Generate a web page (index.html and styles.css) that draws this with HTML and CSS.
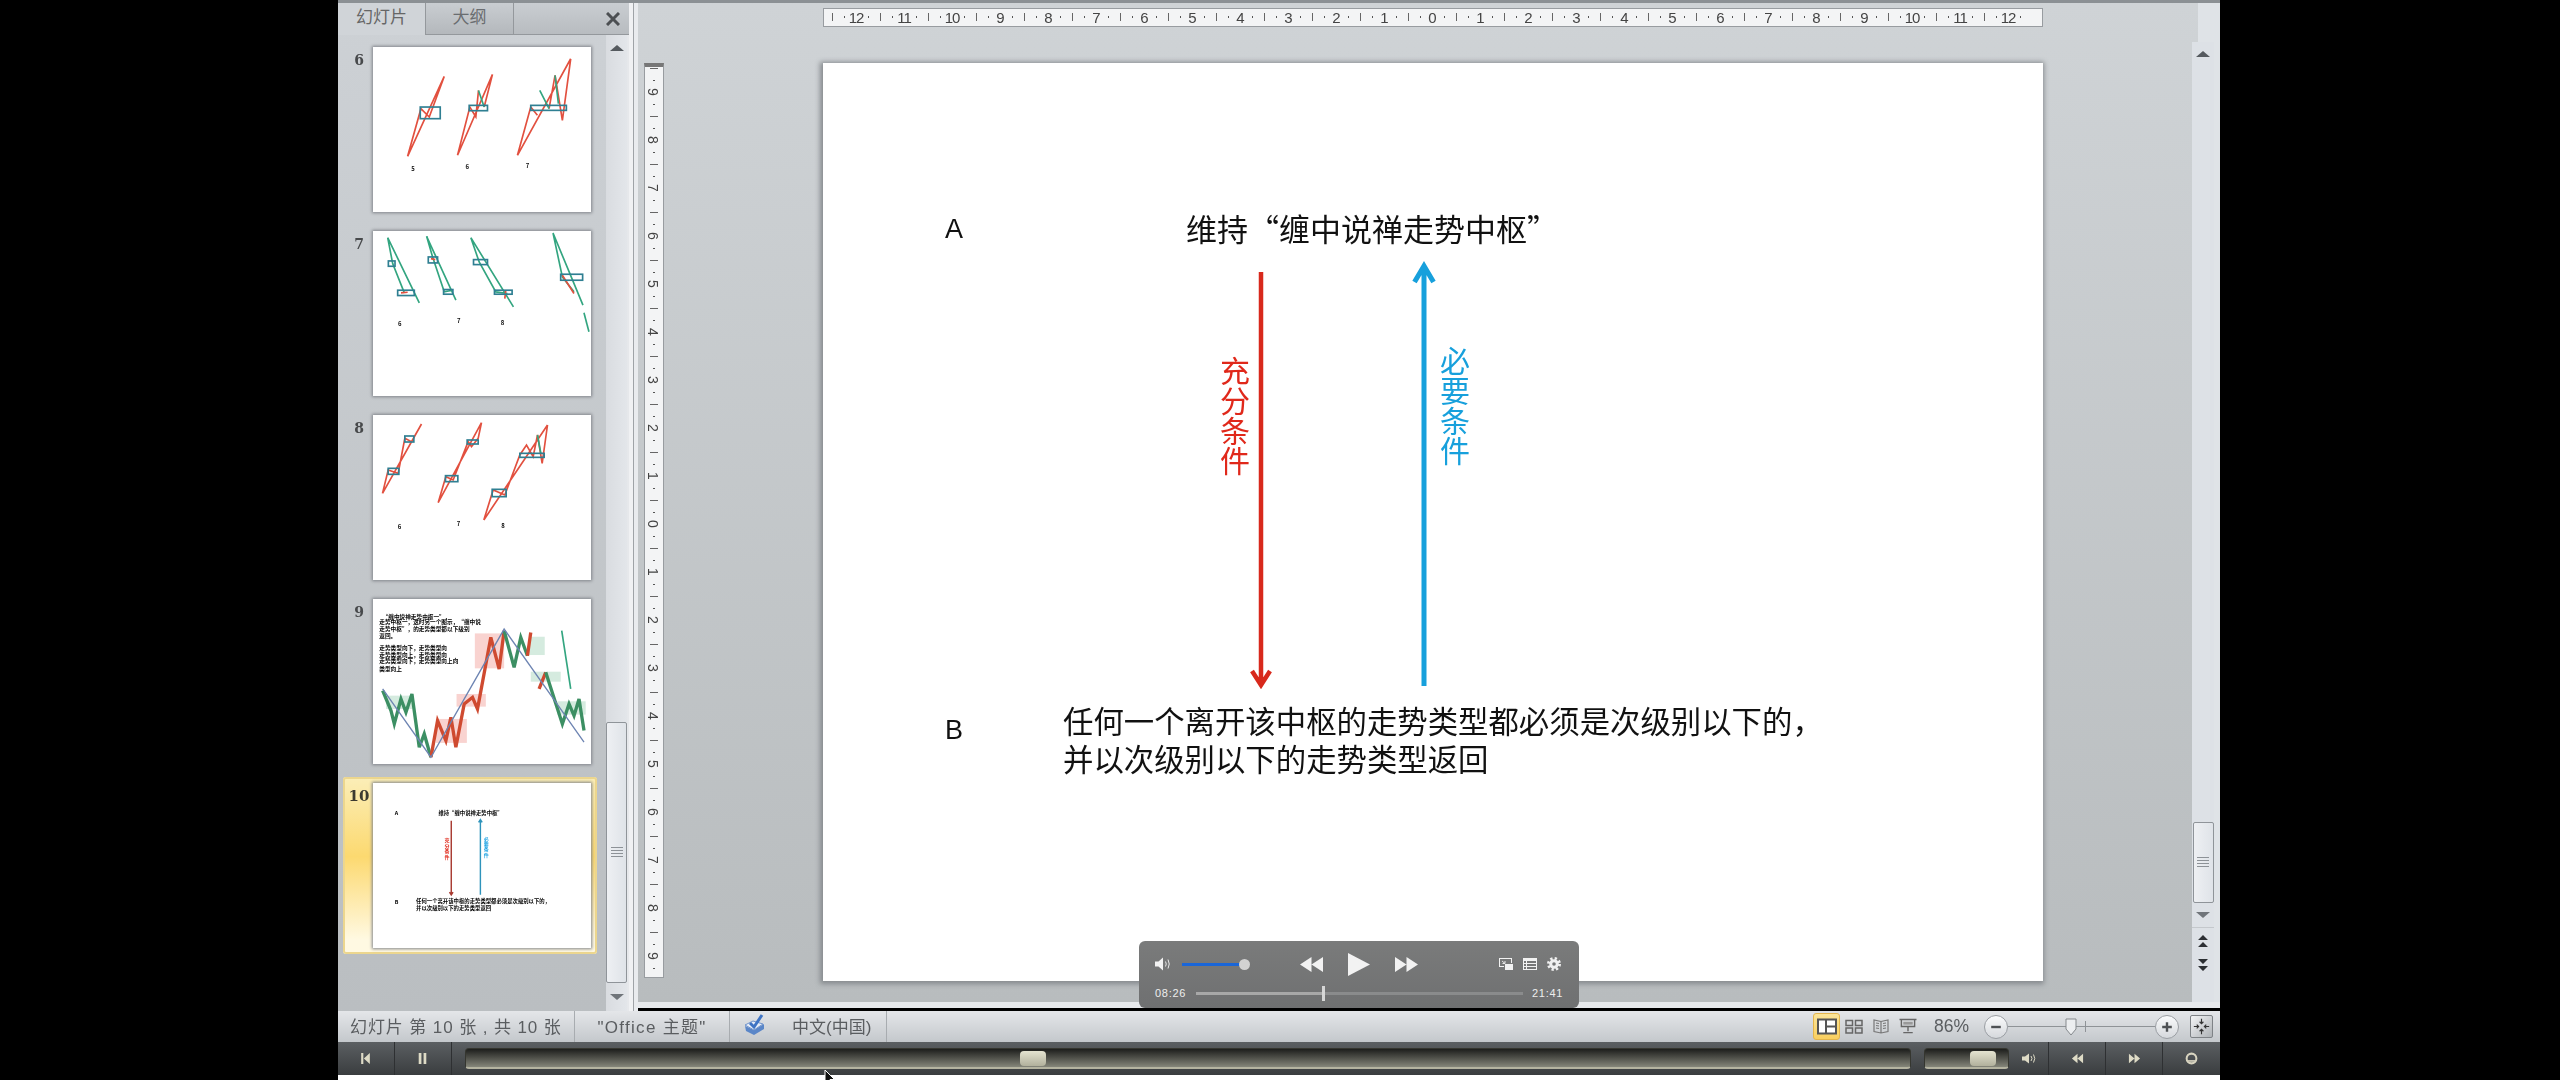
FILE: index.html
```html
<!DOCTYPE html>
<html>
  <head>
    <meta charset="UTF-8" />
    <title>幻灯片 10</title>
    <link rel="stylesheet" href="styles.css">
  </head>
  <body>
    <div class="window">
      <div class="topline"></div>
      <div class="panes">
        <div class="pane">
          <div class="tabs">
            <div class="tab active">幻灯片</div>
            <div class="tab">大纲</div>
            <div class="tab-rest">
              <svg class="close" viewBox="0 0 14 14"><path d="M1 1 L13 13 M13 1 L1 13" /></svg>
            </div>
          </div>
          <div class="pane-body">
            <div class="list">
              <div class="row">
                <div class="num">6</div>
                <svg class="thumb" viewBox="111 140 655 495">
                  <g class="red">
                    <path d="M215 468 L325 228 M215 468 L255 325 L280 350 L325 228" />
                    <path d="M365 465 L470 222 M365 465 L402 320 L420 350 L428 270 M445 320 L470 222" />
                    <path d="M545 465 L705 175 M545 465 L585 320 L605 345 M640 325 L658 225 M658 225 L680 360 L705 175" />
                  </g>
                  <g class="green">
                    <path d="M428 270 L445 320 M612 270 L640 325 M658 225 L668 310" />
                  </g>
                  <g class="box">
                    <rect x="253" y="320" width="60" height="35" />
                    <rect x="400" y="315" width="55" height="16" />
                    <rect x="585" y="315" width="107" height="15" />
                  </g>
                  <g class="mini">
                    <text x="226" y="511">5</text>
                    <text x="389" y="506">6</text>
                    <text x="570" y="503">7</text>
                  </g>
                </svg>
              </div>
              <div class="row">
                <div class="num">7</div>
                <svg class="thumb" viewBox="111 692 655 496">
                  <g class="green">
                    <path d="M155 712 L250 908 M155 712 L170 790 L205 878" />
                    <path d="M272 708 L360 900 M272 708 L290 770 L325 875 L350 870" />
                    <path d="M405 712 L533 920 M405 712 L430 785 L480 875 L515 880" />
                    <path d="M652 698 L742 915 M652 698 L680 830 L715 875" />
                    <path d="M745 938 L760 995" />
                  </g>
                  <g class="red">
                    <path d="M680 825 L715 880 M510 870 L507 895 M195 878 L215 876 M285 775 L298 778" />
                  </g>
                  <g class="box">
                    <rect x="157" y="782" width="20" height="16" />
                    <rect x="185" y="870" width="50" height="16" />
                    <rect x="277" y="770" width="28" height="18" />
                    <rect x="323" y="868" width="28" height="14" />
                    <rect x="413" y="778" width="42" height="15" />
                    <rect x="476" y="870" width="53" height="12" />
                    <rect x="675" y="822" width="66" height="18" />
                  </g>
                  <g class="mini">
                    <text x="186" y="978">6</text>
                    <text x="363" y="970">7</text>
                    <text x="495" y="975">8</text>
                  </g>
                </svg>
              </div>
              <div class="row">
                <div class="num">8</div>
                <svg class="thumb" viewBox="10 15 653 495">
                  <g class="red">
                    <path d="M38 250 L155 42 M38 250 L55 180 L85 190 L105 85 L125 95 L155 42" />
                    <path d="M205 278 L335 38 M205 278 L228 200 L250 210 L295 95 L305 110 L325 85 L335 38" />
                    <path d="M342 330 L533 45 M342 330 L370 240 L405 255 L450 135 L470 105 L490 140 L503 75 L517 160 L533 45" />
                  </g>
                  <g class="green">
                    <path d="M503 75 L513 130" />
                  </g>
                  <g class="box">
                    <rect x="55" y="175" width="32" height="18" />
                    <rect x="105" y="78" width="27" height="18" />
                    <rect x="227" y="197" width="37" height="18" />
                    <rect x="292" y="90" width="33" height="12" />
                    <rect x="367" y="238" width="42" height="22" />
                    <rect x="450" y="130" width="73" height="12" />
                  </g>
                  <g class="mini">
                    <text x="84" y="358">6</text>
                    <text x="261" y="349">7</text>
                    <text x="394" y="354">8</text>
                  </g>
                </svg>
              </div>
              <div class="row">
                <div class="num">9</div>
                <svg class="thumb" viewBox="111 25 655 495">
                  <g class="pink">
                    <rect x="417" y="128" width="88" height="105" />
                    <rect x="362" y="310" width="88" height="38" />
                    <rect x="300" y="385" width="93" height="72" />
                  </g>
                  <g class="mint">
                    <rect x="580" y="138" width="47" height="55" />
                    <rect x="585" y="243" width="90" height="30" />
                    <rect x="150" y="315" width="80" height="40" />
                    <rect x="665" y="332" width="85" height="40" />
                  </g>
                  <g class="lines">
                    <text x="140" y="84">“缠中说禅走势中枢一”，</text>
                    <text x="130" y="101">走势中枢一，这时另一个图示，“缠中说</text>
                    <text x="130" y="121">走势中枢”，的走势类型都以下级别</text>
                    <text x="130" y="141">返回。</text>
                    <text x="130" y="178">走势类型向下，走势类型向</text>
                    <text x="130" y="199">走势类型向上，走势类型向</text>
                    <text x="130" y="218">走势类型向下，走势类型向上向</text>
                    <text x="130" y="241">类型向上</text>
                  </g>
                  <path class="candle-g" d="M140 300 L165 360 L175 400 L195 325 L210 365 L228 310 L250 470 L265 430 L285 500" />
                  <path class="candle-r" d="M285 500 L305 390 L330 450 L345 380 L360 470 L385 340 L410 320 L425 355 L465 140 L490 235 L505 120" />
                  <path class="candle-g" d="M505 120 L535 230 L555 140 L575 195" />
                  <path class="candle-r" d="M575 195 L585 125 M610 295 L630 245" />
                  <path class="candle-g" d="M630 245 L680 400 L700 340 L715 375 L730 325 L745 420" />
                  <path class="trend" d="M140 295 L285 500 L505 115 L745 455" />
                  <path class="green" d="M678 120 L705 295" />
                </svg>
              </div>
              <div class="row active">
                <div class="num">10</div>
                <svg class="thumb" viewBox="0 0 1220 918">
                  <g class="tiny">
                    <text x="122" y="178">A</text>
                    <text x="366" y="178">维持“缠中说禅走势中枢”</text>
                    <text x="122" y="677">B</text>
                    <text x="241" y="670">任何一个离开该中枢的走势类型都必须是次级别以下的，</text>
                    <text x="241" y="708">并以次级别以下的走势类型返回</text>
                  </g>
                  <text class="tiny-red" x="400" y="330">充</text>
                  <text class="tiny-red" x="400" y="360">分</text>
                  <text class="tiny-red" x="400" y="390">条</text>
                  <text class="tiny-red" x="400" y="420">件</text>
                  <text class="tiny-blue" x="620" y="320">必</text>
                  <text class="tiny-blue" x="620" y="350">要</text>
                  <text class="tiny-blue" x="620" y="380">条</text>
                  <text class="tiny-blue" x="620" y="410">件</text>
                  <path class="t-red" d="M438 209 V623 M428 608 L438 624 L448 608" />
                  <path class="t-blue" d="M601 202 V623 M591 218 L601 202 L611 218" />
                </svg>
              </div>
            </div>
            <div class="pane-scroll">
              <div class="arrow up"></div>
              <div class="spacer"></div>
              <div class="scroll-thumb pane-thumb"><div class="grip"></div></div>
              <div class="arrow down"></div>
            </div>
          </div>
        </div>
        <div class="splitter"></div>
        <div class="workspace">
          <div class="stage">
            <div class="hruler">
              <span>12</span><span>11</span><span>10</span><span>9</span><span>8</span><span>7</span><span>6</span><span>5</span><span>4</span><span>3</span><span>2</span><span>1</span><span>0</span><span>1</span><span>2</span><span>3</span><span>4</span><span>5</span><span>6</span><span>7</span><span>8</span><span>9</span><span>10</span><span>11</span><span>12</span>
            </div>
            <div class="vruler">
              <span>9</span><span>8</span><span>7</span><span>6</span><span>5</span><span>4</span><span>3</span><span>2</span><span>1</span><span>0</span><span>1</span><span>2</span><span>3</span><span>4</span><span>5</span><span>6</span><span>7</span><span>8</span><span>9</span>
            </div>
            <div class="slide">
              <svg class="slide-arrows" viewBox="0 0 1220 918">
                <path class="a-red" d="M438 209 V621 M429 608 L438 622 L447 608" />
                <path class="a-blue" d="M601 204 V623 M591.500 219 L601 203 L610.500 219" />
              </svg>
              <div class="letter letter-a">A</div>
              <div class="title">维持“缠中说禅走势中枢”</div>
              <div class="vtext vtext-red">充分条件</div>
              <div class="vtext vtext-blue">必要条件</div>
              <div class="letter letter-b">B</div>
              <div class="body-text">任何一个离开该中枢的走势类型都必须是次级别以下的，<br />并以次级别以下的走势类型返回</div>
            </div>
          </div>
          <div class="main-scroll">
            <div class="arrow up dark"></div>
            <div class="spacer"></div>
            <div class="scroll-thumb main-thumb"><div class="grip"></div></div>
            <div class="arrow down"></div>
            <div class="page-btns">
              <svg viewBox="0 0 12 14"><path d="M6 0 L11 5 H1 Z M6 7 L11 12 H1 Z" /></svg>
              <svg viewBox="0 0 12 14"><path d="M1 1 H11 L6 6 Z M1 8 H11 L6 13 Z" /></svg>
            </div>
          </div>
        </div>
      </div>

      <div class="status">
        <div class="cell cell-count">幻灯片 第 10 张 , 共 10 张</div>
        <div class="cell cell-theme">"Office 主题"</div>
        <div class="cell cell-lang">
          <svg class="check" viewBox="0 0 24 24">
            <path d="M2 13 L11 17 L21 11 L21 16 L11 22 L3 18 Z" fill="#5a86c8" />
            <path d="M2 12 L10 8 L20 11 L11 17 Z" fill="#e8eef8" stroke="#6f93cc" />
            <path d="M7 10 L11 14 L19 2" fill="none" stroke="#3f74c4" stroke-width="3" />
          </svg>
          <span>中文(中国)</span>
        </div>
        <div class="status-right">
          <div class="view-btn on">
            <svg viewBox="0 0 20 16"><rect x="1" y="1" width="18" height="14" fill="#fff" stroke="#555" stroke-width="2" /><rect x="8" y="1" width="2" height="14" fill="#555" /><rect x="10" y="7" width="9" height="2" fill="#555" /></svg>
          </div>
          <div class="view-btn">
            <svg viewBox="0 0 20 16"><g fill="none" stroke="#666" stroke-width="1.500"><rect x="2" y="2" width="6.500" height="5" /><rect x="11.500" y="2" width="6.500" height="5" /><rect x="2" y="9.500" width="6.500" height="5" /><rect x="11.500" y="9.500" width="6.500" height="5" /></g></svg>
          </div>
          <div class="view-btn">
            <svg viewBox="0 0 20 16"><g fill="none" stroke="#777" stroke-width="1.200"><path d="M10 3 L3 1.500 V13 L10 14.500 L17 13 V1.500 Z M10 3 V14.500" /><path d="M5 4.500 L8 5 M5 7 L8 7.500 M5 9.500 L8 10 M12 5 L15 4.500 M12 7.500 L15 7 M12 10 L15 9.500" /></g></svg>
          </div>
          <div class="view-btn">
            <svg viewBox="0 0 20 18"><g fill="none" stroke="#666" stroke-width="1.500"><path d="M1 1.500 H19 M3 1.500 V9 H17 V1.500 M10 9 V14 M5 15.500 H15" /></g><rect x="5" y="4" width="10" height="3" fill="#999" /></svg>
          </div>
          <div class="zoom-val">86%</div>
          <div class="zoom-round">
            <svg viewBox="0 0 10 10"><path d="M1 5 H9" /></svg>
          </div>
          <div class="zoom-track">
            <div class="zoom-tick"></div>
            <svg class="zoom-handle" viewBox="0 0 12 18"><path d="M1 1 H11 V11 L6 17 L1 11 Z" /></svg>
          </div>
          <div class="zoom-round">
            <svg viewBox="0 0 10 10"><path d="M1 5 H9 M5 1 V9" /></svg>
          </div>
          <div class="fit">
            <svg viewBox="0 0 22 22"><path d="M11 3 V8 M9 6 L11 8 L13 6 M11 19 V14 M9 16 L11 14 L13 16 M3 11 H8 M6 9 L8 11 L6 13 M19 11 H14 M16 9 L14 11 L16 13" /></svg>
          </div>
        </div>
      </div>

      <div class="playbar">
        <div class="pb-btn">
          <svg viewBox="0 0 10 12"><path d="M1 1 H3 V11 H1 Z M9 1 V11 L3.500 6 Z" /></svg>
        </div>
        <div class="pb-btn">
          <svg viewBox="0 0 10 12"><path d="M1.500 1 H4 V11 H1.500 Z M6 1 H8.500 V11 H6 Z" /></svg>
        </div>
        <div class="track track-main"><div class="track-knob"></div></div>
        <div class="track track-vol"><div class="track-knob"></div></div>
        <div class="pb-btn pb-vol">
          <svg viewBox="0 0 16 12"><path d="M1 4 H4 L8 1 V11 L4 8 H1 Z" /><path class="pb-arc" d="M10 3.500 Q12 6 10 8.500 M12.500 2 Q15 6 12.500 10" /></svg>
        </div>
        <div class="pb-btn">
          <svg viewBox="0 0 14 12"><path d="M7 1 V11 L1 6 Z M13 1 V11 L7 6 Z" /></svg>
        </div>
        <div class="pb-btn">
          <svg viewBox="0 0 14 12"><path d="M1 1 V11 L7 6 Z M7 1 V11 L13 6 Z" /></svg>
        </div>
        <div class="pb-btn pb-end">
          <svg viewBox="0 0 16 16"><circle cx="8" cy="8" r="6" fill="none" stroke="#d8d4c0" stroke-width="2.500" /><path d="M3 11 H13" stroke="#d8d4c0" stroke-width="2" /></svg>
        </div>
      </div>
      <div class="strip"></div>

      <div class="player">
        <div class="player-top">
          <svg class="p-vol" viewBox="0 0 17 14"><path class="fill" d="M0 4.500 H3.500 L8 .5 V13.500 L3.500 9.500 H0 Z" /><path class="arc" d="M10.500 4.500 Q12 7 10.500 9.500 M13 2.500 Q15.500 7 13 11.500" /></svg>
          <div class="p-slider"><div class="p-fill"></div><div class="p-knob"></div></div>
          <svg class="p-skip" viewBox="0 0 23 15"><path class="fill" d="M11.500 0 V15 L0 7.500 Z M23 0 V15 L11.500 7.500 Z" /></svg>
          <svg class="p-play" viewBox="0 0 22 23"><path class="fill" d="M0 0 L22 11.500 L0 23 Z" /></svg>
          <svg class="p-skip" viewBox="0 0 23 15"><path class="fill" d="M0 0 V15 L11.500 7.500 Z M11.500 0 V15 L23 7.500 Z" /></svg>
          <svg class="p-pip" viewBox="0 0 14 12"><path class="fill" d="M0 0 H13 V5 H12 V1 H1 V8 H5 V9 H0 Z M6 6 H14 V12 H6 Z" /><path class="arc" d="M3 3 L6 5.500 M6 3 V5.500 H3.500" /></svg>
          <svg class="p-list" viewBox="0 0 14 12"><path class="fill" fill-rule="evenodd" d="M0 0 H14 V12 H0 Z M1 3 V5 H3 V3 Z M4 3 V5 H13 V3 Z M1 6 V8 H3 V6 Z M4 6 V8 H13 V6 Z M1 9 V11 H3 V9 Z M4 9 V11 H13 V9 Z" /></svg>
          <svg class="p-gear" viewBox="0 0 14 14"><circle class="gear-teeth" cx="7" cy="7" r="5.500" /><circle class="gear-ring" cx="7" cy="7" r="3.300" /></svg>
        </div>
        <div class="player-bottom">
          <span class="p-time">08:26</span>
          <div class="p-bar"><div class="p-done"></div><div class="p-head"></div></div>
          <span class="p-time">21:41</span>
        </div>
      </div>

      <svg class="cursor" viewBox="0 0 12 18"><path d="M1 1 L1 14 L4 11 L6.500 16.500 L8.500 15.500 L6 10.500 L10.500 10.500 Z" /></svg>
    </div>
  </body>
</html>
```
FILE: styles.css
```css
* {
  box-sizing: border-box;
}
html,
body {
  margin: 0;
  height: 100%;
  background: #000;
  overflow: hidden;
}
body {
  font-family: "Liberation Sans", "Noto Sans CJK SC", sans-serif;
  color: #555;
}
svg {
  display: block;
}

.window {
  position: relative;
  width: 1882px;
  height: 1080px;
  margin-left: 338px;
  display: flex;
  flex-direction: column;
}
.topline {
  height: 3px;
  background: #8b9094;
}
.panes {
  height: 1008px;
  display: flex;
  filter: blur(0.4px);
}

/* left pane */
.pane {
  width: 291px;
  display: flex;
  flex-direction: column;
  background: linear-gradient(#cdd1d5, #babec1);
}
.tabs {
  height: 32px;
  display: flex;
  background: #bfc3c7;
}
.tab {
  width: 88px;
  font-size: 17px;
  line-height: 30px;
  text-align: center;
  color: #6a6d70;
  background: linear-gradient(#c9cdd1, #b4b8bc);
  border-right: 1px solid #94989c;
  border-bottom: 1px solid #94989c;
}
.tab.active {
  background: #d0d4d8;
  color: #666;
  border-bottom: 0;
}
.tab-rest {
  flex: 1;
  display: flex;
  justify-content: flex-end;
  align-items: center;
  padding-right: 9px;
  border-bottom: 1px solid #94989c;
  background: linear-gradient(#c9cdd1, #b8bcc0);
}
.close {
  width: 14px;
  height: 14px;
}
.close path {
  fill: none;
  stroke: #4c4f52;
  stroke-width: 3;
}
.pane-body {
  flex: 1;
  display: flex;
  min-height: 0;
}
.list {
  flex: 1;
  display: flex;
  flex-direction: column;
  gap: 7px;
  padding: 6px 0 0 5px;
}
.row {
  width: 254px;
  height: 177px;
  display: flex;
  padding: 6px;
  padding-left: 2px;
  border-radius: 3px;
}
.row.active {
  background: linear-gradient(#fbeeb8, #fcd970 45%, #fff9e2 92%);
  box-shadow: inset 0 0 0 2px #ecd68e;
}
.num {
  width: 28px;
  text-align: center;
  font-family: "DejaVu Serif", serif;
  font-weight: bold;
  font-size: 14px;
  line-height: 26px;
  color: #47494b;
}
.row.active .num {
  font-size: 15px;
  color: #3c3a30;
}
.thumb {
  width: 218px;
  height: 165px;
  font-family: "Noto Sans CJK SC", sans-serif;
  background: #fff;
  box-shadow: 0 0 3px 1px #80848a;
  filter: blur(0.5px);
}
.thumb path,
.thumb rect {
  fill: none;
}
.red path {
  stroke: #e2503f;
  stroke-width: 5;
}
.green,
.green path {
  stroke: #33a580;
  stroke-width: 5;
}
.box rect {
  stroke: #2f7f92;
  stroke-width: 5;
}
.mini text {
  font-size: 18px;
  font-weight: bold;
  fill: #111;
}
.thumb .pink rect {
  fill: #f9d3d0;
}
.thumb .mint rect {
  fill: #d5ebdf;
}
.lines text {
  font-size: 17px;
  font-weight: bold;
  fill: #000;
}
.candle-g {
  stroke: #3c8f63;
  stroke-width: 10;
}
.candle-r {
  stroke: #cf4a30;
  stroke-width: 10;
}
.trend {
  stroke: #6d84b2;
  stroke-width: 4;
}
.tiny text {
  font-size: 30px;
  font-weight: bold;
  fill: #000;
}
.tiny-red {
  font-size: 28px;
  font-weight: bold;
  fill: #e0281a;
}
.tiny-blue {
  font-size: 28px;
  font-weight: bold;
  fill: #1ba1e2;
}
.t-red {
  stroke: #a83a30;
  stroke-width: 8;
}
.t-blue {
  stroke: #2e93bb;
  stroke-width: 8;
}

/* scrollbars */
.pane-scroll {
  width: 23px;
  display: flex;
  flex-direction: column;
  align-items: center;
  background: linear-gradient(90deg, #d9dce0, #e3e6ea);
  border-right: 2px solid #e6e8eb;
}
.spacer {
  flex: 1;
}
.arrow {
  width: 100%;
  height: 25px;
  display: flex;
  align-items: center;
  justify-content: center;
}
.arrow::before {
  content: "";
  border-left: 7px solid transparent;
  border-right: 7px solid transparent;
}
.arrow.up::before {
  border-bottom: 6px solid #555a5f;
}
.arrow.down::before {
  border-top: 6px solid #70757a;
}
.scroll-thumb {
  display: flex;
  align-items: center;
  justify-content: center;
  background: linear-gradient(90deg, #eef0f3, #dfe3e8);
  border: 1px solid #8f9499;
  border-radius: 2px;
}
.pane-thumb {
  width: 21px;
  height: 261px;
}
.pane-thumb + .arrow {
  height: 28px;
}
.grip {
  width: 12px;
  height: 11px;
  background: repeating-linear-gradient(#8d9297 0 1px, transparent 1px 3px);
}
.splitter {
  width: 9px;
  background: linear-gradient(90deg, #f0f1f3 0 4px, #9fa3a7 4px 5px, #e9ebee 5px);
}

/* slide area */
.workspace {
  flex: 1;
  display: flex;
  border-bottom: 6px solid #e7e9ec;
  margin-bottom: 3px;
  background: linear-gradient(#cfd3d6, #b8bcbe);
}
.stage {
  flex: 1;
  padding: 5px 0 0 6px;
  display: grid;
  grid-template-columns: 20px 1220px;
  grid-template-rows: 19px 918px;
  column-gap: 159px;
  row-gap: 36px;
}
.hruler {
  grid-column: 2;
  height: 19px;
  padding-left: 8px;
  display: flex;
  font-size: 15px;
  line-height: 18px;
  color: #444;
  border: 1px solid #989ca0;
  background: #f3f4f5;
}
.hruler span {
  width: 48px;
  text-align: center;
  letter-spacing: -1px;
  background:
    linear-gradient(#666, #666) 0 4px / 1px 8px no-repeat,
    linear-gradient(#555, #555) 12px 7px / 1px 2px no-repeat,
    linear-gradient(#555, #555) 36px 7px / 1px 2px no-repeat;
}
.vruler {
  grid-column: 1;
  grid-row: 2;
  width: 20px;
  height: 915px;
  padding-top: 1px;
  border: 1px solid #989ca0;
  border-top: 4px solid #777;
  background: #f3f4f5;
  font-size: 14px;
  color: #444;
}
.vruler span {
  display: flex;
  align-items: center;
  justify-content: center;
  height: 48px;
  writing-mode: vertical-rl;
  background:
    linear-gradient(#666, #666) 5px 0 / 8px 1px no-repeat,
    linear-gradient(#555, #555) 8px 12px / 2px 1px no-repeat,
    linear-gradient(#555, #555) 8px 36px / 2px 1px no-repeat;
}
.slide {
  position: relative;
  grid-column: 2;
  grid-row: 2;
  background: #fff;
  box-shadow: -1px 1px 5px 2px #868a8e;
  color: #111;
  font-family: "Noto Sans CJK SC", sans-serif;
}
.slide-arrows {
  position: absolute;
  left: 0;
  top: 0;
  width: 1220px;
  height: 918px;
}
.slide-arrows path {
  fill: none;
}
.a-red {
  stroke: #d8291c;
  stroke-width: 4.500;
}
.a-blue {
  stroke: #17a0dc;
  stroke-width: 5;
}
.letter,
.title,
.body-text,
.vtext {
  position: absolute;
}
.letter {
  left: 122px;
  font-family: "Liberation Sans", sans-serif;
  font-size: 27px;
  line-height: 32px;
}
.letter-a {
  top: 150px;
}
.letter-b {
  top: 651px;
}
.title,
.body-text {
  line-height: 38px;
  white-space: nowrap;
}
.title {
  left: 363px;
  top: 146px;
  font-size: 31px;
}
.body-text {
  left: 240px;
  top: 638px;
  font-size: 30.400px;
}
.vtext {
  writing-mode: vertical-rl;
  font-size: 30px;
  line-height: 30px;
}
.vtext-red {
  left: 397px;
  top: 293px;
  color: #e0281a;
}
.vtext-blue {
  left: 617px;
  top: 283px;
  color: #17a0dc;
}
.main-scroll {
  width: 22px;
  margin: 39px 6px 0 0;
  position: relative;
  display: flex;
  flex-direction: column;
  align-items: center;
  background: #dde1e6;
  box-shadow: 6px -39px 0 #dfe3e7, 6px 0 0 #dfe3e7;
}
.arrow.dark {
  height: 24px;
}
.main-thumb {
  width: 21px;
  height: 81px;
}
.main-thumb + .arrow {
  height: 24px;
}
.page-btns {
  height: 75px;
  width: 100%;
  border-top: 1px solid #c4c8cc;
  padding-top: 7px;
  display: flex;
  flex-direction: column;
  align-items: center;
  gap: 9px;
}
.page-btns svg {
  width: 12px;
  height: 14px;
}
.page-btns path {
  fill: #2c2f33;
}

/* status bar */
.status {
  height: 31px;
  display: flex;
  align-items: center;
  background: linear-gradient(#e4e6e9, #c4c8cc);
  font-size: 17px;
  color: #5a5d60;
  filter: blur(0.4px);
}
.cell {
  height: 100%;
  padding-bottom: 3px;
  display: flex;
  align-items: center;
  border-right: 1px solid #a8acb0;
  white-space: nowrap;
}
.cell-count {
  width: 237px;
  padding-left: 12px;
  letter-spacing: .9px;
}
.cell-theme {
  width: 155px;
  justify-content: center;
  letter-spacing: 1.300px;
}
.cell-lang {
  width: 157px;
  padding-left: 13px;
}
.cell-lang span {
  margin-left: 25px;
}
.check {
  width: 24px;
  height: 24px;
}
.status-right {
  margin-left: auto;
  height: 100%;
  display: flex;
  align-items: center;
  padding-right: 7px;
}
.view-btn {
  width: 27px;
  height: 27px;
  display: flex;
  align-items: center;
  justify-content: center;
}
.view-btn svg {
  width: 20px;
  height: 17px;
}
.view-btn.on {
  background: linear-gradient(#fbe59a, #f9cf5f);
  border: 1px solid #e5b64c;
  border-radius: 3px;
}
.zoom-val {
  margin-left: 13px;
  width: 38px;
  font-size: 17.500px;
  white-space: nowrap;
}
.zoom-round {
  width: 24px;
  height: 24px;
  border-radius: 50%;
  display: flex;
  align-items: center;
  justify-content: center;
  background: linear-gradient(#fafbfc, #d5d8dc);
  border: 1px solid #9a9ea3;
}
.status-right .zoom-val + .zoom-round {
  margin-left: 12px;
}
.zoom-round svg {
  width: 12px;
  height: 12px;
}
.zoom-round path {
  fill: none;
  stroke: #4e5154;
  stroke-width: 2;
}
.zoom-track {
  position: relative;
  width: 147px;
  height: 1px;
  background: #8f9397;
}
.zoom-tick {
  position: absolute;
  left: 77px;
  top: -5px;
  width: 1px;
  height: 11px;
  background: #8f9397;
}
.zoom-handle {
  position: absolute;
  left: 57px;
  top: -8px;
  width: 12px;
  height: 18px;
}
.zoom-handle path {
  fill: #eceef0;
  stroke: #85898d;
}
.fit {
  width: 23px;
  height: 23px;
  margin-left: 11px;
  background: linear-gradient(135deg, #f4f5f6, #aeb2b6);
  border: 1px solid #7e8286;
  border-radius: 2px;
}
.fit path {
  fill: none;
  stroke: #333;
  stroke-width: 1.200;
}

/* video bar */
.playbar {
  height: 33px;
  display: flex;
  align-items: center;
  background: linear-gradient(#5b5f62, #3a3d3f);
}
.pb-btn {
  width: 57px;
  height: 100%;
  display: flex;
  align-items: center;
  justify-content: center;
  border-right: 1px solid #2e3032;
}
.pb-btn svg {
  width: 13px;
  height: 13px;
}
.pb-btn path {
  fill: #dedbc6;
}
.pb-btn path.pb-arc {
  fill: none;
  stroke: #dedbc6;
}
.track {
  position: relative;
  height: 21px;
  display: flex;
  align-items: center;
  background: linear-gradient(#1d1e1c, #6a6b62 75%, #85867a);
  border: 1px solid #35362f;
  border-bottom: 2px solid #b4b3a0;
  border-radius: 4px;
}
.track-main {
  width: 1449px;
  margin-left: 13px;
}
.track-vol {
  width: 86px;
  margin-left: 13px;
}
.track-knob {
  position: absolute;
  height: 15px;
  border-radius: 4px;
  background: linear-gradient(#e4e3d0, #b1b09c);
}
.track-main .track-knob {
  left: 554px;
  width: 26px;
}
.track-vol .track-knob {
  left: 45px;
  width: 26px;
}
.pb-vol {
  width: 40px;
}
.pb-vol svg {
  width: 16px;
}
.pb-end {
  border-right: 0;
}

/* video player overlay */
.player {
  position: absolute;
  left: 801px;
  top: 941px;
  width: 440px;
  height: 67px;
  padding: 11px 16px 0;
  border-radius: 6px;
  background: linear-gradient(#7a7b7b, #6f7071);
  color: #eee;
}
.player .fill {
  fill: #f2f2f2;
}
.player .arc {
  fill: none;
  stroke: #e8e8e8;
  stroke-width: 1;
}
.player-top {
  height: 24px;
  display: flex;
  align-items: center;
}
.p-vol {
  width: 17px;
  height: 14px;
}
.p-slider {
  position: relative;
  width: 63px;
  height: 3px;
  margin-left: 10px;
  border-radius: 2px;
}
.p-fill {
  height: 3px;
  background: #1a66d8;
}
.p-knob {
  position: absolute;
  right: -5px;
  top: -4px;
  width: 11px;
  height: 11px;
  border-radius: 50%;
  background: #d2d2d2;
}
.p-skip {
  width: 23px;
  height: 15px;
  margin-left: 55px;
}
.p-skip + .p-play {
  margin-left: 25px;
}
.p-play {
  width: 22px;
  height: 23px;
}
.p-play + .p-skip {
  margin-left: 25px;
}
.p-pip {
  width: 14px;
  height: 12px;
  margin-left: 81px;
}
.p-list {
  width: 14px;
  height: 12px;
  margin-left: 10px;
}
.p-gear {
  width: 14px;
  height: 14px;
  margin-left: 10px;
}
.gear-teeth {
  fill: none;
  stroke: #f0f0f0;
  stroke-width: 3;
  stroke-dasharray: 2.200 2.120;
}
.gear-ring {
  fill: none;
  stroke: #f0f0f0;
  stroke-width: 3;
}
.player-bottom {
  display: flex;
  align-items: center;
  height: 20px;
  margin-top: 7px;
}
.p-time {
  width: 31px;
  font-size: 11px;
  letter-spacing: .7px;
  white-space: nowrap;
}
.p-bar {
  position: relative;
  width: 327px;
  height: 3px;
  margin: 0 9px 0 10px;
  background: #8a8b8c;
}
.p-done {
  width: 127px;
  height: 3px;
  background: #a8a8a8;
}
.p-head {
  position: absolute;
  left: 126px;
  top: -6px;
  width: 3px;
  height: 15px;
  background: #d6d6d6;
}

.strip {
  flex: 1;
  background: #fff;
}
.cursor {
  position: absolute;
  left: 486px;
  top: 1069px;
  width: 12px;
  height: 18px;
}
.cursor path {
  fill: #111;
  stroke: #fff;
  stroke-width: 1;
}
```
